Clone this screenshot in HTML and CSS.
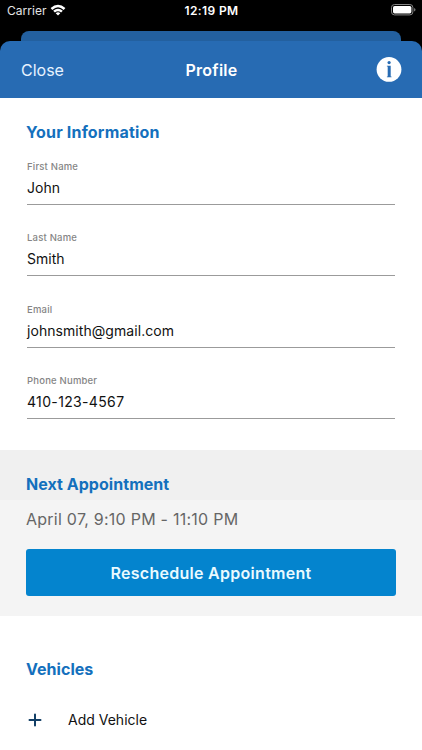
FILE: index.html
```html
<!DOCTYPE html>
<html lang="en">
<head>
<meta charset="utf-8">
<meta name="viewport" content="width=device-width, initial-scale=1">
<title>Profile</title>
<link rel="stylesheet" href="styles.css">
</head>
<body>
<div class="status">
  <div class="status-left"><span class="carrier">Carrier</span>
    <svg class="wifi" viewBox="0 0 16 12" width="16" height="12"><path d="M.6 4.1Q8-2.4 15.4 4.1L13.7 5.9Q8 .8 2.3 5.9ZM3.2 6.8Q8 2.6 12.8 6.8L11.1 8.5Q8 5.8 4.9 8.5ZM5.7 9.3Q8 7.4 10.3 9.3L8 11.6Z" fill="#fff"/></svg>
  </div>
  <time class="clock">12:19 PM</time>
  <svg class="battery" viewBox="0 0 25 12" width="25" height="12"><rect x=".5" y=".5" width="21.4" height="10.4" rx="3" fill="none" stroke="#858585"/><rect x="2" y="2" width="18.4" height="7.4" rx="1.6" fill="#fff"/><path d="M23.1 4v3.6q1.4-.5 1.4-1.8T23.1 4" fill="#858585"/></svg>
</div>
<div class="back-sheet"></div>
<header class="header">
  <span class="close">Close</span>
  <h1 class="title">Profile</h1>
  <svg class="info" viewBox="0 0 26 26" width="26" height="26"><circle cx="13" cy="12.4" r="12.4" fill="#fff"/><circle cx="13.1" cy="5.6" r="1.6" fill="#276bb3"/><path d="M10.9 8.8h3.8v10.6h.8v.8h-4.6v-.8h.8V9.6h-.8z" fill="#276bb3"/></svg>
</header>
<main>
  <section class="information">
    <h2>Your Information</h2>
    <div class="field"><span class="label">First Name</span><span class="value">John</span></div>
    <div class="field"><span class="label">Last Name</span><span class="value">Smith</span></div>
    <div class="field"><span class="label">Email</span><span class="value v-email">johnsmith@gmail.com</span></div>
    <div class="field"><span class="label">Phone Number</span><span class="value v-phone">410-123-4567</span></div>
  </section>
  <section class="appointment">
    <h2>Next Appointment</h2>
    <p class="date">April 07, 9:10 PM - 11:10 PM</p>
    <button class="button">Reschedule Appointment</button>
  </section>
  <section class="vehicles">
    <h2>Vehicles</h2>
    <div class="add">
      <svg viewBox="0 0 14 14" width="14" height="14"><path d="M7 1.5v11M1.5 7h11" stroke="#123f66" stroke-width="2" stroke-linecap="round"/></svg>
      <span>Add Vehicle</span>
    </div>
  </section>
</main>
</body>
</html>
```

FILE: styles.css
```css
* { box-sizing: border-box; }
html { background: #000; }
body { margin: 0; height: 750px; overflow: hidden; background: #000; font-family: Inter, "Liberation Sans", sans-serif; white-space: nowrap; }
h1, h2, p { margin: 0; }
svg { display: block; }

.status { height: 31px; padding: 4px 6px 0 7px; display: grid; grid-template-columns: 1fr auto 1fr; align-items: start; color: #fff; }
.status-left { display: flex; gap: 4px; }
.carrier { font-size: 12px; line-height: 14px; color: #e4e4e4; letter-spacing: .02px; }
.clock { font-size: 12px; line-height: 14px; font-weight: 600; letter-spacing: .4px; }
.battery { justify-self: end; }
.back-sheet { height: 10px; margin: 0 21px; background: #23609f; border-radius: 8px 8px 0 0; }
.header { height: 57px; padding: 0 20px 0 21px; display: grid; grid-template-columns: 1fr auto 1fr; align-items: center; background: #276bb3; border-radius: 10px 10px 0 0; color: #fff; }
.close { font-size: 16px; line-height: 20px; color: #e7f3ff; }
.title { font-size: 16px; line-height: 20px; font-weight: 600; letter-spacing: .28px; }
.info { justify-self: end; }

main { height: 652px; background: #fff; }
h2 { font-size: 16px; line-height: 20px; font-weight: 700; color: #1470bd; letter-spacing: .04px; }
.information { height: 352px; padding: 24px 27px 0; }
.information h2 { margin-left: -1px; margin-bottom: 18px; letter-spacing: .17px; }
.field { height: 45px; margin-bottom: 26.25px; border-bottom: 1px solid #9b9b9b; display: flex; flex-direction: column; }
.label { font-size: 9.5px; line-height: 14px; font-weight: 500; color: #858585; letter-spacing: .2px; }
.value { font-size: 14px; line-height: 20px; margin-top: 4px; color: #111; }
.v-email { letter-spacing: .06px; }
.v-phone { letter-spacing: .35px; }

.appointment { height: 166px; padding: 24px 26px 0; background: linear-gradient(#f0f0f0 50px, #f4f4f4 50px); }
.date { margin-top: 15px; font-size: 16px; line-height: 20px; color: #666; letter-spacing: .25px; }
.button { display: block; width: 100%; height: 47px; margin: 20px 0 0; padding: 0; border: 0; border-radius: 3px; background: #0484ce; color: #e9faff; font: 600 16px/20px Inter, sans-serif; letter-spacing: .28px; }
.vehicles { padding: 43px 26px 0; }
.add { margin-top: 31px; margin-left: 2px; display: flex; align-items: center; gap: 26px; font-size: 14px; line-height: 20px; color: #111; }
```
